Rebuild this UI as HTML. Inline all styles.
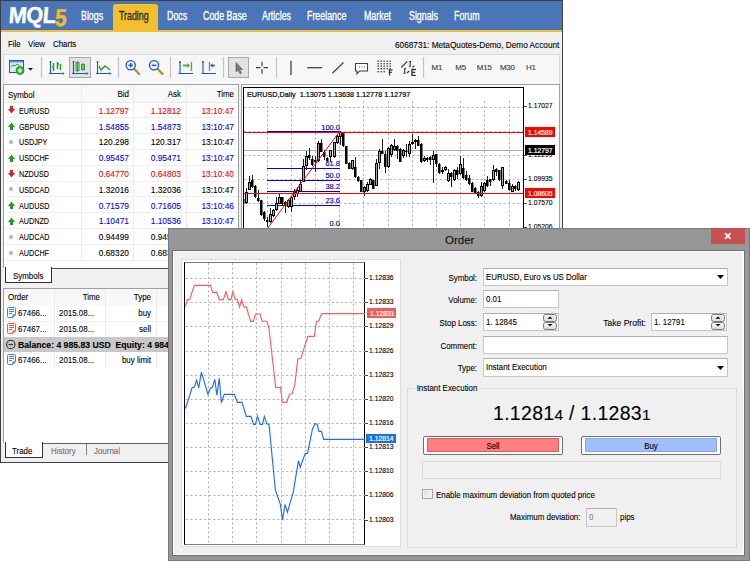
<!DOCTYPE html><html><head><meta charset="utf-8"><style>
*{margin:0;padding:0;box-sizing:border-box}
html,body{width:750px;height:561px;overflow:hidden;background:#fff;font-family:"Liberation Sans",sans-serif;color:#000}
.abs{position:absolute}
.t{position:absolute;white-space:nowrap;font-size:8.5px;line-height:10px;letter-spacing:-0.2px;-webkit-text-stroke:0.12px currentColor}
.r{text-align:right}
.n{font-size:9px;letter-spacing:0;transform-origin:0 0;transform:scaleX(0.88);-webkit-text-stroke:0.1px currentColor}
.r.n{transform-origin:100% 0}
</style></head><body>
<div class="abs" style="left:0;top:0;width:563px;height:463px;background:#f0f0f0;border:1px solid #404040"></div>
<div class="abs" style="left:1px;top:1px;width:561px;height:29px;background:#4a76b8"></div>
<div class="abs" style="left:1px;top:29px;width:561px;height:1px;background:#3f6ec4"></div>
<div class="abs" style="left:1px;top:30px;width:561px;height:2px;background:#f3bf2c"></div>
<div class="abs" style="left:113px;top:4px;width:45px;height:27px;background:#f3bf2c;border-radius:3px 3px 0 0"></div>
<div class="t" style="left:8px;top:1px;font-size:23px;line-height:28px;font-weight:bold;color:#fff;letter-spacing:-0.6px;-webkit-text-stroke:0.4px #fff;transform-origin:0 24px;transform:skewX(-4deg) scaleX(0.95)">MQL</div>
<div class="t" style="left:56.3px;top:2.5px;font-size:22px;line-height:28px;font-weight:bold;color:#f5b82a;-webkit-text-stroke:0.4px #f5b82a;transform-origin:0 0;transform:skewX(-4deg) scale(0.95,1.1)">5</div>
<div class="t" style="left:81.3px;top:7px;font-size:13px;line-height:18px;color:#fff;-webkit-text-stroke:0.35px #fff;letter-spacing:0;transform-origin:0 0;transform:scaleX(0.68)">Blogs</div>
<div class="t" style="left:119.2px;top:7px;font-size:13px;line-height:18px;color:#2b2b2b;-webkit-text-stroke:0.35px #2b2b2b;letter-spacing:0;transform-origin:0 0;transform:scaleX(0.68)">Trading</div>
<div class="t" style="left:166.7px;top:7px;font-size:13px;line-height:18px;color:#fff;-webkit-text-stroke:0.35px #fff;letter-spacing:0;transform-origin:0 0;transform:scaleX(0.68)">Docs</div>
<div class="t" style="left:202.7px;top:7px;font-size:13px;line-height:18px;color:#fff;-webkit-text-stroke:0.35px #fff;letter-spacing:0;transform-origin:0 0;transform:scaleX(0.68)">Code Base</div>
<div class="t" style="left:261.7px;top:7px;font-size:13px;line-height:18px;color:#fff;-webkit-text-stroke:0.35px #fff;letter-spacing:0;transform-origin:0 0;transform:scaleX(0.68)">Articles</div>
<div class="t" style="left:307.3px;top:7px;font-size:13px;line-height:18px;color:#fff;-webkit-text-stroke:0.35px #fff;letter-spacing:0;transform-origin:0 0;transform:scaleX(0.68)">Freelance</div>
<div class="t" style="left:364px;top:7px;font-size:13px;line-height:18px;color:#fff;-webkit-text-stroke:0.35px #fff;letter-spacing:0;transform-origin:0 0;transform:scaleX(0.68)">Market</div>
<div class="t" style="left:409px;top:7px;font-size:13px;line-height:18px;color:#fff;-webkit-text-stroke:0.35px #fff;letter-spacing:0;transform-origin:0 0;transform:scaleX(0.68)">Signals</div>
<div class="t" style="left:454.3px;top:7px;font-size:13px;line-height:18px;color:#fff;-webkit-text-stroke:0.35px #fff;letter-spacing:0;transform-origin:0 0;transform:scaleX(0.68)">Forum</div>
<div class="t n" style="left:8px;top:39px;">File</div>
<div class="t n" style="left:28px;top:39px;">View</div>
<div class="t n" style="left:53px;top:39px;">Charts</div>
<div class="t n" style="left:395px;top:40px;transform:scaleX(0.915)">6068731: MetaQuotes-Demo, Demo Account</div>
<div class="abs" style="left:3px;top:54px;width:557px;height:30px;background:#f7f7f7;border:1px solid #dadada;border-bottom:none"></div>
<svg class="abs" style="left:0;top:54px" width="562" height="30" viewBox="0 54 562 30">
<rect x="69.5" y="57.5" width="21.0" height="20" fill="#e2e2e2" stroke="#a8a8a8"/>
<rect x="228.5" y="57.5" width="20.0" height="20" fill="#e2e2e2" stroke="#a8a8a8"/>
<line x1="41.5" y1="57" x2="41.5" y2="78" stroke="#c4c4c4" stroke-width="1.2"/>
<line x1="118.5" y1="57" x2="118.5" y2="78" stroke="#c4c4c4" stroke-width="1.2"/>
<line x1="170.5" y1="57" x2="170.5" y2="78" stroke="#c4c4c4" stroke-width="1.2"/>
<line x1="223.5" y1="57" x2="223.5" y2="78" stroke="#c4c4c4" stroke-width="1.2"/>
<line x1="276.5" y1="57" x2="276.5" y2="78" stroke="#c4c4c4" stroke-width="1.2"/>
<line x1="423.5" y1="57" x2="423.5" y2="78" stroke="#c4c4c4" stroke-width="1.2"/>
<rect x="9.5" y="60.5" width="14" height="12" fill="#dbe8f8" stroke="#1a56c8"/>
<rect x="9.5" y="60.5" width="14" height="2" fill="#1a56c8" opacity="0.6"/>
<polyline points="11,67 13,65 15,66 17,64 20,66" fill="none" stroke="#2ca02c" stroke-width="1"/>
<circle cx="20" cy="70.5" r="4" fill="#3cb83c" stroke="#1f8a1f" stroke-width="0.8"/>
<path d="M18 70.5h4M20 68.5v4" stroke="#fff" stroke-width="1.4"/>
<path d="M28 68h5l-2.5 2.6z" fill="#000"/>
<path d="M50.5 61 V74 M49 73.5 H62.5" stroke="#1a56c8" stroke-width="1.1" fill="none"/><circle cx="50.5" cy="61.8" r="0.9" fill="#1a56c8"/><path d="M62.5 72 l2 1.5 l-2 1.5z" fill="#1a56c8"/>
<path d="M53.5 63v8M53.5 67h-1.5M57.5 62v7M57.5 64h1.5M60.5 64v6" stroke="#2ca02c" stroke-width="1.5" fill="none"/>
<path d="M73.5 61 V74 M72 73.5 H86.5" stroke="#1a56c8" stroke-width="1.1" fill="none"/><circle cx="73.5" cy="61.8" r="0.9" fill="#1a56c8"/><path d="M86.5 72 l2 1.5 l-2 1.5z" fill="#1a56c8"/>
<rect x="76" y="62.5" width="3" height="8" fill="#bfe6b0" stroke="#2ca02c" stroke-width="1"/><path d="M77.5 61v11" stroke="#2ca02c"/>
<rect x="81.5" y="64.5" width="3" height="5" fill="#bfe6b0" stroke="#2ca02c" stroke-width="1"/><path d="M83 63v8" stroke="#2ca02c"/>
<path d="M97.5 61 V74 M96 73.5 H109.5" stroke="#1a56c8" stroke-width="1.1" fill="none"/><circle cx="97.5" cy="61.8" r="0.9" fill="#1a56c8"/><path d="M109.5 72 l2 1.5 l-2 1.5z" fill="#1a56c8"/>
<polyline points="99,66 101,70 105,66 110,70" fill="none" stroke="#2ca02c" stroke-width="1.6"/>
<path d="M133.7 68.3 L139.2 74" stroke="#b58a2a" stroke-width="2.2" stroke-linecap="round"/>
<circle cx="130.7" cy="65.3" r="4.6" fill="#e8f2fc" stroke="#1a56c8" stroke-width="1.3"/>
<path d="M128.5 65.3h4.4" stroke="#1a56c8" stroke-width="1.4"/>
<path d="M130.7 63.1v4.4" stroke="#1a56c8" stroke-width="1.4"/>
<path d="M157 68.3 L162.5 74" stroke="#b58a2a" stroke-width="2.2" stroke-linecap="round"/>
<circle cx="154" cy="65.3" r="4.6" fill="#e8f2fc" stroke="#1a56c8" stroke-width="1.3"/>
<path d="M151.8 65.3h4.4" stroke="#1a56c8" stroke-width="1.4"/>
<path d="M180 61.5V74M178.5 73.5H193" stroke="#1a56c8" stroke-width="1.1"/><circle cx="180" cy="62" r="0.9" fill="#1a56c8"/>
<path d="M183 65.5h5" stroke="#3cb83c" stroke-width="2"/><path d="M187.5 63l2.5 2.5-2.5 2.5z" fill="#3cb83c"/>
<path d="M191.5 62v9" stroke="#808080" stroke-width="1.3"/>
<path d="M203 61.5V74M201.5 73.5H216" stroke="#1a56c8" stroke-width="1.1"/><circle cx="203" cy="62" r="0.9" fill="#1a56c8"/>
<path d="M209.5 62v9" stroke="#808080" stroke-width="1.3"/>
<path d="M215 65.5h-3" stroke="#1a56c8" stroke-width="1.5"/><path d="M212.5 63.3l-2.2 2.2 2.2 2.2z" fill="#1a56c8"/>
<path d="M236 62.5v9.5l2.2-2 1.8 3.8 1.4-0.7-1.8-3.6h3z" fill="#7a7a7a" stroke="#505050" stroke-width="0.6"/>
<path d="M256 67.7h4.5M263.5 67.7h4.5M262 61.7v4.5M262 69.2v4.5" stroke="#404040" stroke-width="1.2"/>
<path d="M291 60.7V75" stroke="#404040" stroke-width="1.3"/>
<path d="M307.3 67.7H322" stroke="#404040" stroke-width="1.3"/>
<path d="M332.4 73.3L343.6 62.4" stroke="#404040" stroke-width="1.3"/>
<path d="M355.5 63.5h12v7.5h-8l-2.5 2.8v-2.8h-1.5z" fill="#fff" stroke="#404040" stroke-width="1.1"/>
<path d="M359 67h1M361.5 67h1M364 67h1" stroke="#404040" stroke-width="1"/>
<rect x="377.5" y="60.5" width="1.4" height="1.4" fill="#404040"/>
<rect x="377.5" y="63" width="1.4" height="1.4" fill="#404040"/>
<rect x="377.5" y="65.5" width="1.4" height="1.4" fill="#404040"/>
<rect x="377.5" y="68" width="1.4" height="1.4" fill="#404040"/>
<rect x="380.5" y="60.5" width="1.4" height="1.4" fill="#404040"/>
<rect x="380.5" y="63" width="1.4" height="1.4" fill="#404040"/>
<rect x="380.5" y="65.5" width="1.4" height="1.4" fill="#404040"/>
<rect x="380.5" y="68" width="1.4" height="1.4" fill="#404040"/>
<rect x="383.5" y="60.5" width="1.4" height="1.4" fill="#404040"/>
<rect x="383.5" y="63" width="1.4" height="1.4" fill="#404040"/>
<rect x="383.5" y="65.5" width="1.4" height="1.4" fill="#404040"/>
<rect x="383.5" y="68" width="1.4" height="1.4" fill="#404040"/>
<rect x="386.5" y="60.5" width="1.4" height="1.4" fill="#404040"/>
<rect x="386.5" y="63" width="1.4" height="1.4" fill="#404040"/>
<rect x="386.5" y="65.5" width="1.4" height="1.4" fill="#404040"/>
<rect x="386.5" y="68" width="1.4" height="1.4" fill="#404040"/>
<rect x="389.5" y="60.5" width="1.4" height="1.4" fill="#404040"/>
<rect x="389.5" y="63" width="1.4" height="1.4" fill="#404040"/>
<rect x="389.5" y="65.5" width="1.4" height="1.4" fill="#404040"/>
<rect x="389.5" y="68" width="1.4" height="1.4" fill="#404040"/>
<rect x="377.5" y="71" width="1.4" height="1.4" fill="#404040"/>
<rect x="380.5" y="71" width="1.4" height="1.4" fill="#404040"/>
<rect x="383.5" y="71" width="1.4" height="1.4" fill="#404040"/>
<path d="M389.5 75.5V69.8h3M389.5 72.3h2.3" stroke="#303030" stroke-width="1.3" fill="none"/>
<path d="M401.3 67.3L407.3 61.3" stroke="#303030" stroke-width="1.2" fill="none"/>
<path d="M409.2 61.5h2M410.2 61.5v5M409.2 66.5h1.5" stroke="#303030" stroke-width="1.1" fill="none"/>
<path d="M412.5 67.2l1.8-1.6" stroke="#303030" stroke-width="1.2"/>
<path d="M403.5 73.3h2M404.7 73.3v-5M404.7 68.3h1.4" stroke="#303030" stroke-width="1.1" fill="none"/>
<path d="M407 73.2l2-2.2" stroke="#303030" stroke-width="1.2"/>
<path d="M415.8 69.5h-3.8v5.8h3.8M412 72.4h3.2" stroke="#303030" stroke-width="1.3" fill="none"/>
</svg>
<div class="t" style="left:431.6px;top:63px;color:#404040;font-size:8px">M1</div>
<div class="t" style="left:455.3px;top:63px;color:#404040;font-size:8px">M5</div>
<div class="t" style="left:476.7px;top:63px;color:#404040;font-size:8px">M15</div>
<div class="t" style="left:499.9px;top:63px;color:#404040;font-size:8px">M30</div>
<div class="t" style="left:526px;top:63px;color:#404040;font-size:8px">H1</div>
<div class="abs" style="left:3px;top:84px;width:236px;height:185px;background:#fff;border:1px solid #a0a0a0;border-bottom:none"></div>
<div class="abs" style="left:4px;top:85px;width:234px;height:18px;background:#f8f8f8;border-bottom:1px solid #e8e8e8"></div>
<div class="abs" style="left:81px;top:85px;width:1px;height:175px;background:#ececec"></div>
<div class="abs" style="left:133px;top:85px;width:1px;height:175px;background:#ececec"></div>
<div class="abs" style="left:186px;top:85px;width:1px;height:175px;background:#ececec"></div>
<div class="t n" style="left:7.5px;top:89.5px;">Symbol</div>
<div class="t r n" style="left:80px;width:49px;top:89px">Bid</div>
<div class="t r n" style="left:132px;width:49px;top:89px">Ask</div>
<div class="t r n" style="left:185px;width:49px;top:89px">Time</div>
<div class="abs" style="left:5px;top:117.3px;width:233px;height:1px;background:#efefef"></div>
<svg class="abs" style="left:8px;top:106.3px" width="7" height="8"><path d="M2 0h3v3h2l-3.5 4.5L0 3h2z" fill="#e02020"/></svg>
<div class="t n" style="left:18.5px;top:105.8px;transform:scaleX(0.8)">EURUSD</div>
<div class="t r n" style="left:80px;width:49px;top:105.8px;color:#ff0000;transform:scaleX(0.93)">1.12797</div>
<div class="t r n" style="left:132px;width:49px;top:105.8px;color:#ff0000;transform:scaleX(0.93)">1.12812</div>
<div class="t r n" style="left:185px;width:49px;top:105.8px;color:#ff0000;transform:scaleX(0.93)">13:10:47</div>
<div class="abs" style="left:5px;top:133.1px;width:233px;height:1px;background:#efefef"></div>
<svg class="abs" style="left:8px;top:122.1px" width="7" height="8"><path d="M2 8h3v-3h2l-3.5-4.5L0 5h2z" fill="#20a020"/></svg>
<div class="t n" style="left:18.5px;top:121.6px;transform:scaleX(0.8)">GBPUSD</div>
<div class="t r n" style="left:80px;width:49px;top:121.6px;color:#0000ff;transform:scaleX(0.93)">1.54855</div>
<div class="t r n" style="left:132px;width:49px;top:121.6px;color:#0000ff;transform:scaleX(0.93)">1.54873</div>
<div class="t r n" style="left:185px;width:49px;top:121.6px;color:#0000ff;transform:scaleX(0.93)">13:10:47</div>
<div class="abs" style="left:5px;top:148.9px;width:233px;height:1px;background:#efefef"></div>
<div class="abs" style="left:9px;top:139.9px;width:4px;height:4px;border-radius:50%;background:#b0b0b0"></div>
<div class="t n" style="left:18.5px;top:137.4px;transform:scaleX(0.8)">USDJPY</div>
<div class="t r n" style="left:80px;width:49px;top:137.4px;color:#000;transform:scaleX(0.93)">120.298</div>
<div class="t r n" style="left:132px;width:49px;top:137.4px;color:#000;transform:scaleX(0.93)">120.317</div>
<div class="t r n" style="left:185px;width:49px;top:137.4px;color:#000;transform:scaleX(0.93)">13:10:47</div>
<div class="abs" style="left:5px;top:164.7px;width:233px;height:1px;background:#efefef"></div>
<svg class="abs" style="left:8px;top:153.7px" width="7" height="8"><path d="M2 8h3v-3h2l-3.5-4.5L0 5h2z" fill="#20a020"/></svg>
<div class="t n" style="left:18.5px;top:153.2px;transform:scaleX(0.8)">USDCHF</div>
<div class="t r n" style="left:80px;width:49px;top:153.2px;color:#0000ff;transform:scaleX(0.93)">0.95457</div>
<div class="t r n" style="left:132px;width:49px;top:153.2px;color:#0000ff;transform:scaleX(0.93)">0.95471</div>
<div class="t r n" style="left:185px;width:49px;top:153.2px;color:#0000ff;transform:scaleX(0.93)">13:10:47</div>
<div class="abs" style="left:5px;top:180.5px;width:233px;height:1px;background:#efefef"></div>
<svg class="abs" style="left:8px;top:169.5px" width="7" height="8"><path d="M2 0h3v3h2l-3.5 4.5L0 3h2z" fill="#e02020"/></svg>
<div class="t n" style="left:18.5px;top:169.0px;transform:scaleX(0.8)">NZDUSD</div>
<div class="t r n" style="left:80px;width:49px;top:169.0px;color:#ff0000;transform:scaleX(0.93)">0.64770</div>
<div class="t r n" style="left:132px;width:49px;top:169.0px;color:#ff0000;transform:scaleX(0.93)">0.64803</div>
<div class="t r n" style="left:185px;width:49px;top:169.0px;color:#ff0000;transform:scaleX(0.93)">13:10:40</div>
<div class="abs" style="left:5px;top:196.3px;width:233px;height:1px;background:#efefef"></div>
<div class="abs" style="left:9px;top:187.3px;width:4px;height:4px;border-radius:50%;background:#b0b0b0"></div>
<div class="t n" style="left:18.5px;top:184.8px;transform:scaleX(0.8)">USDCAD</div>
<div class="t r n" style="left:80px;width:49px;top:184.8px;color:#000;transform:scaleX(0.93)">1.32016</div>
<div class="t r n" style="left:132px;width:49px;top:184.8px;color:#000;transform:scaleX(0.93)">1.32036</div>
<div class="t r n" style="left:185px;width:49px;top:184.8px;color:#000;transform:scaleX(0.93)">13:10:47</div>
<div class="abs" style="left:5px;top:212.1px;width:233px;height:1px;background:#efefef"></div>
<svg class="abs" style="left:8px;top:201.1px" width="7" height="8"><path d="M2 8h3v-3h2l-3.5-4.5L0 5h2z" fill="#20a020"/></svg>
<div class="t n" style="left:18.5px;top:200.6px;transform:scaleX(0.8)">AUDUSD</div>
<div class="t r n" style="left:80px;width:49px;top:200.6px;color:#0000ff;transform:scaleX(0.93)">0.71579</div>
<div class="t r n" style="left:132px;width:49px;top:200.6px;color:#0000ff;transform:scaleX(0.93)">0.71605</div>
<div class="t r n" style="left:185px;width:49px;top:200.6px;color:#0000ff;transform:scaleX(0.93)">13:10:46</div>
<div class="abs" style="left:5px;top:227.9px;width:233px;height:1px;background:#efefef"></div>
<svg class="abs" style="left:8px;top:216.9px" width="7" height="8"><path d="M2 8h3v-3h2l-3.5-4.5L0 5h2z" fill="#20a020"/></svg>
<div class="t n" style="left:18.5px;top:216.4px;transform:scaleX(0.8)">AUDNZD</div>
<div class="t r n" style="left:80px;width:49px;top:216.4px;color:#0000ff;transform:scaleX(0.93)">1.10471</div>
<div class="t r n" style="left:132px;width:49px;top:216.4px;color:#0000ff;transform:scaleX(0.93)">1.10536</div>
<div class="t r n" style="left:185px;width:49px;top:216.4px;color:#0000ff;transform:scaleX(0.93)">13:10:47</div>
<div class="abs" style="left:5px;top:243.7px;width:233px;height:1px;background:#efefef"></div>
<div class="abs" style="left:9px;top:234.7px;width:4px;height:4px;border-radius:50%;background:#b0b0b0"></div>
<div class="t n" style="left:18.5px;top:232.2px;transform:scaleX(0.8)">AUDCAD</div>
<div class="t r n" style="left:80px;width:49px;top:232.2px;color:#000;transform:scaleX(0.93)">0.94499</div>
<div class="t r n" style="left:132px;width:49px;top:232.2px;color:#000;transform:scaleX(0.93)">0.94512</div>
<div class="t r n" style="left:185px;width:49px;top:232.2px;color:#000;transform:scaleX(0.93)">13:10:47</div>
<div class="abs" style="left:5px;top:259.5px;width:233px;height:1px;background:#efefef"></div>
<div class="abs" style="left:9px;top:250.5px;width:4px;height:4px;border-radius:50%;background:#b0b0b0"></div>
<div class="t n" style="left:18.5px;top:248.0px;transform:scaleX(0.8)">AUDCHF</div>
<div class="t r n" style="left:80px;width:49px;top:248.0px;color:#000;transform:scaleX(0.93)">0.68320</div>
<div class="t r n" style="left:132px;width:49px;top:248.0px;color:#000;transform:scaleX(0.93)">0.68337</div>
<div class="t r n" style="left:185px;width:49px;top:248.0px;color:#000;transform:scaleX(0.93)">13:10:47</div>
<div class="abs" style="left:51px;top:268px;width:188px;height:15px;background:#f0f0f0;border-top:1px solid #505050"></div>
<div class="abs" style="left:3px;top:268px;width:2px;height:15px;background:#f0f0f0"></div>
<div class="abs" style="left:5px;top:267px;width:47px;height:16px;background:#fff;border:1px solid #303030;border-top:none;border-right-width:1.5px"></div>
<div class="t n" style="left:12.5px;top:271px;">Symbols</div>
<div class="abs" style="left:239px;top:84px;width:2px;height:200px;background:#f0f0f0"></div>
<div class="abs" style="left:241px;top:84px;width:319px;height:150px;background:#fff;border:1px solid #a0a0a0"></div>
<div class="abs" style="left:243px;top:87px;width:281px;height:150px;border-left:1px solid #000;border-top:1px solid #000;border-right:1px solid #000"></div>
<svg class="abs" style="left:243px;top:84px" width="320" height="150" viewBox="243 84 320 150" shape-rendering="crispEdges">
<line x1="267.5" y1="101" x2="267.5" y2="230" stroke="#b4b4b4" stroke-dasharray="2.2,2.35" shape-rendering="auto"/>
<line x1="291.5" y1="101" x2="291.5" y2="230" stroke="#b4b4b4" stroke-dasharray="2.2,2.35" shape-rendering="auto"/>
<line x1="315.5" y1="101" x2="315.5" y2="230" stroke="#b4b4b4" stroke-dasharray="2.2,2.35" shape-rendering="auto"/>
<line x1="339.5" y1="101" x2="339.5" y2="230" stroke="#b4b4b4" stroke-dasharray="2.2,2.35" shape-rendering="auto"/>
<line x1="363.5" y1="101" x2="363.5" y2="230" stroke="#b4b4b4" stroke-dasharray="2.2,2.35" shape-rendering="auto"/>
<line x1="388.5" y1="101" x2="388.5" y2="230" stroke="#b4b4b4" stroke-dasharray="2.2,2.35" shape-rendering="auto"/>
<line x1="412.5" y1="101" x2="412.5" y2="230" stroke="#b4b4b4" stroke-dasharray="2.2,2.35" shape-rendering="auto"/>
<line x1="436.5" y1="101" x2="436.5" y2="230" stroke="#b4b4b4" stroke-dasharray="2.2,2.35" shape-rendering="auto"/>
<line x1="460.5" y1="101" x2="460.5" y2="230" stroke="#b4b4b4" stroke-dasharray="2.2,2.35" shape-rendering="auto"/>
<line x1="484.5" y1="101" x2="484.5" y2="230" stroke="#b4b4b4" stroke-dasharray="2.2,2.35" shape-rendering="auto"/>
<line x1="509.5" y1="101" x2="509.5" y2="230" stroke="#b4b4b4" stroke-dasharray="2.2,2.35" shape-rendering="auto"/>
<line x1="244" y1="107.5" x2="523" y2="107.5" stroke="#b4b4b4" stroke-dasharray="2.2,2.35" shape-rendering="auto"/>
<line x1="244" y1="131.5" x2="523" y2="131.5" stroke="#b4b4b4" stroke-dasharray="2.2,2.35" shape-rendering="auto"/>
<line x1="244" y1="155.5" x2="523" y2="155.5" stroke="#b4b4b4" stroke-dasharray="2.2,2.35" shape-rendering="auto"/>
<line x1="244" y1="179.5" x2="523" y2="179.5" stroke="#b4b4b4" stroke-dasharray="2.2,2.35" shape-rendering="auto"/>
<line x1="244" y1="203.5" x2="523" y2="203.5" stroke="#b4b4b4" stroke-dasharray="2.2,2.35" shape-rendering="auto"/>
<line x1="244" y1="228.5" x2="523" y2="228.5" stroke="#b4b4b4" stroke-dasharray="2.2,2.35" shape-rendering="auto"/>
<line x1="244" y1="150.5" x2="523" y2="150.5" stroke="#b0b0b0"/>
<line x1="267" y1="131.5" x2="340" y2="131.5" stroke="#0000e0" stroke-width="1"/>
<line x1="267" y1="168.5" x2="340" y2="168.5" stroke="#0000e0" stroke-width="1"/>
<line x1="267" y1="180.5" x2="340" y2="180.5" stroke="#0000e0" stroke-width="1"/>
<line x1="267" y1="191.5" x2="340" y2="191.5" stroke="#0000e0" stroke-width="1"/>
<line x1="267" y1="205.5" x2="340" y2="205.5" stroke="#0000e0" stroke-width="1"/>
<line x1="267" y1="229.5" x2="340" y2="229.5" stroke="#0000e0" stroke-width="1"/>
<rect x="243" y="197" width="1" height="9" fill="#202020"/>
<rect x="242" y="199" width="2" height="5" fill="#000"/>
<rect x="244" y="199" width="1" height="5" fill="#7a7a7a"/>
<rect x="246" y="188" width="1" height="16" fill="#202020"/>
<rect x="245" y="192" width="3" height="11" fill="#000"/>
<rect x="246" y="193" width="1" height="9" fill="#a8a8a8"/>
<rect x="249" y="176" width="1" height="14" fill="#202020"/>
<rect x="248" y="182" width="3" height="8" fill="#000"/>
<rect x="249" y="183" width="1" height="6" fill="#a8a8a8"/>
<rect x="252" y="175" width="1" height="13" fill="#202020"/>
<rect x="251" y="180" width="2" height="7" fill="#000"/>
<rect x="253" y="180" width="1" height="7" fill="#7a7a7a"/>
<rect x="255" y="185" width="1" height="13" fill="#202020"/>
<rect x="254" y="186" width="2" height="11" fill="#000"/>
<rect x="256" y="186" width="1" height="11" fill="#7a7a7a"/>
<rect x="258" y="190" width="1" height="12" fill="#202020"/>
<rect x="257" y="198" width="2" height="3" fill="#000"/>
<rect x="259" y="198" width="1" height="3" fill="#7a7a7a"/>
<rect x="261" y="200" width="1" height="16" fill="#202020"/>
<rect x="260" y="200" width="2" height="15" fill="#000"/>
<rect x="262" y="200" width="1" height="15" fill="#7a7a7a"/>
<rect x="264" y="211" width="1" height="10" fill="#202020"/>
<rect x="263" y="212" width="2" height="7" fill="#000"/>
<rect x="265" y="212" width="1" height="7" fill="#7a7a7a"/>
<rect x="267" y="217" width="1" height="10" fill="#202020"/>
<rect x="266" y="220" width="2" height="2" fill="#000"/>
<rect x="268" y="220" width="1" height="2" fill="#7a7a7a"/>
<rect x="270" y="208" width="1" height="15" fill="#202020"/>
<rect x="269" y="214" width="3" height="8" fill="#000"/>
<rect x="270" y="215" width="1" height="6" fill="#a8a8a8"/>
<rect x="273" y="209" width="1" height="8" fill="#202020"/>
<rect x="272" y="210" width="3" height="6" fill="#000"/>
<rect x="273" y="211" width="1" height="4" fill="#a8a8a8"/>
<rect x="276" y="197" width="1" height="14" fill="#202020"/>
<rect x="275" y="203" width="3" height="7" fill="#000"/>
<rect x="276" y="204" width="1" height="5" fill="#a8a8a8"/>
<rect x="279" y="194" width="1" height="10" fill="#202020"/>
<rect x="278" y="197" width="3" height="7" fill="#000"/>
<rect x="279" y="198" width="1" height="5" fill="#a8a8a8"/>
<rect x="282" y="197" width="1" height="9" fill="#202020"/>
<rect x="281" y="197" width="2" height="7" fill="#000"/>
<rect x="283" y="197" width="1" height="7" fill="#7a7a7a"/>
<rect x="285" y="201" width="1" height="12" fill="#202020"/>
<rect x="284" y="202" width="2" height="4" fill="#000"/>
<rect x="286" y="202" width="1" height="4" fill="#7a7a7a"/>
<rect x="288" y="199" width="1" height="9" fill="#202020"/>
<rect x="287" y="200" width="3" height="7" fill="#000"/>
<rect x="288" y="201" width="1" height="5" fill="#a8a8a8"/>
<rect x="291" y="196" width="1" height="16" fill="#202020"/>
<rect x="290" y="197" width="3" height="10" fill="#000"/>
<rect x="291" y="198" width="1" height="8" fill="#a8a8a8"/>
<rect x="294" y="189" width="1" height="11" fill="#202020"/>
<rect x="293" y="192" width="3" height="5" fill="#000"/>
<rect x="294" y="193" width="1" height="3" fill="#a8a8a8"/>
<rect x="297" y="187" width="1" height="10" fill="#202020"/>
<rect x="296" y="190" width="3" height="4" fill="#000"/>
<rect x="297" y="191" width="1" height="2" fill="#a8a8a8"/>
<rect x="300" y="180" width="1" height="12" fill="#202020"/>
<rect x="299" y="184" width="3" height="8" fill="#000"/>
<rect x="300" y="185" width="1" height="6" fill="#a8a8a8"/>
<rect x="303" y="159" width="1" height="23" fill="#202020"/>
<rect x="302" y="166" width="3" height="16" fill="#000"/>
<rect x="303" y="167" width="1" height="14" fill="#a8a8a8"/>
<rect x="306" y="151" width="1" height="19" fill="#202020"/>
<rect x="305" y="156" width="3" height="10" fill="#000"/>
<rect x="306" y="157" width="1" height="8" fill="#a8a8a8"/>
<rect x="309" y="148" width="1" height="12" fill="#202020"/>
<rect x="308" y="155" width="2" height="3" fill="#000"/>
<rect x="310" y="155" width="1" height="3" fill="#7a7a7a"/>
<rect x="312" y="156" width="1" height="10" fill="#202020"/>
<rect x="311" y="159" width="2" height="6" fill="#000"/>
<rect x="313" y="159" width="1" height="6" fill="#7a7a7a"/>
<rect x="315" y="156" width="1" height="16" fill="#202020"/>
<rect x="314" y="160" width="2" height="2" fill="#000"/>
<rect x="316" y="160" width="1" height="2" fill="#7a7a7a"/>
<rect x="318" y="141" width="1" height="21" fill="#202020"/>
<rect x="317" y="143" width="3" height="18" fill="#000"/>
<rect x="318" y="144" width="1" height="16" fill="#a8a8a8"/>
<rect x="321" y="139" width="1" height="13" fill="#202020"/>
<rect x="320" y="143" width="2" height="9" fill="#000"/>
<rect x="322" y="143" width="1" height="9" fill="#7a7a7a"/>
<rect x="324" y="150" width="1" height="10" fill="#202020"/>
<rect x="323" y="152" width="2" height="5" fill="#000"/>
<rect x="325" y="152" width="1" height="5" fill="#7a7a7a"/>
<rect x="327" y="157" width="1" height="5" fill="#202020"/>
<rect x="326" y="158" width="2" height="3" fill="#000"/>
<rect x="328" y="158" width="1" height="3" fill="#7a7a7a"/>
<rect x="330" y="150" width="1" height="12" fill="#202020"/>
<rect x="329" y="150" width="3" height="7" fill="#000"/>
<rect x="330" y="151" width="1" height="5" fill="#a8a8a8"/>
<rect x="334" y="142" width="1" height="16" fill="#202020"/>
<rect x="333" y="142" width="3" height="15" fill="#000"/>
<rect x="334" y="143" width="1" height="13" fill="#a8a8a8"/>
<rect x="337" y="135" width="1" height="9" fill="#202020"/>
<rect x="336" y="136" width="3" height="7" fill="#000"/>
<rect x="337" y="137" width="1" height="5" fill="#a8a8a8"/>
<rect x="340" y="131" width="1" height="14" fill="#202020"/>
<rect x="339" y="132" width="3" height="5" fill="#000"/>
<rect x="340" y="133" width="1" height="3" fill="#a8a8a8"/>
<rect x="343" y="132" width="1" height="15" fill="#202020"/>
<rect x="342" y="132" width="2" height="14" fill="#000"/>
<rect x="344" y="132" width="1" height="14" fill="#7a7a7a"/>
<rect x="346" y="146" width="1" height="18" fill="#202020"/>
<rect x="345" y="146" width="2" height="18" fill="#000"/>
<rect x="347" y="146" width="1" height="18" fill="#7a7a7a"/>
<rect x="349" y="162" width="1" height="7" fill="#202020"/>
<rect x="348" y="163" width="2" height="6" fill="#000"/>
<rect x="350" y="163" width="1" height="6" fill="#7a7a7a"/>
<rect x="352" y="160" width="1" height="10" fill="#202020"/>
<rect x="351" y="160" width="3" height="9" fill="#000"/>
<rect x="352" y="161" width="1" height="7" fill="#a8a8a8"/>
<rect x="355" y="157" width="1" height="21" fill="#202020"/>
<rect x="354" y="167" width="2" height="10" fill="#000"/>
<rect x="356" y="167" width="1" height="10" fill="#7a7a7a"/>
<rect x="358" y="176" width="1" height="6" fill="#202020"/>
<rect x="357" y="177" width="2" height="4" fill="#000"/>
<rect x="359" y="177" width="1" height="4" fill="#7a7a7a"/>
<rect x="361" y="180" width="1" height="12" fill="#202020"/>
<rect x="360" y="180" width="2" height="12" fill="#000"/>
<rect x="362" y="180" width="1" height="12" fill="#7a7a7a"/>
<rect x="364" y="186" width="1" height="10" fill="#202020"/>
<rect x="363" y="187" width="3" height="5" fill="#000"/>
<rect x="364" y="188" width="1" height="3" fill="#a8a8a8"/>
<rect x="367" y="182" width="1" height="10" fill="#202020"/>
<rect x="366" y="184" width="3" height="7" fill="#000"/>
<rect x="367" y="185" width="1" height="5" fill="#a8a8a8"/>
<rect x="370" y="178" width="1" height="7" fill="#202020"/>
<rect x="369" y="179" width="3" height="6" fill="#000"/>
<rect x="370" y="180" width="1" height="4" fill="#a8a8a8"/>
<rect x="373" y="180" width="1" height="9" fill="#202020"/>
<rect x="372" y="180" width="2" height="9" fill="#000"/>
<rect x="374" y="180" width="1" height="9" fill="#7a7a7a"/>
<rect x="376" y="159" width="1" height="27" fill="#202020"/>
<rect x="375" y="163" width="3" height="23" fill="#000"/>
<rect x="376" y="164" width="1" height="21" fill="#a8a8a8"/>
<rect x="379" y="149" width="1" height="20" fill="#202020"/>
<rect x="378" y="151" width="3" height="12" fill="#000"/>
<rect x="379" y="152" width="1" height="10" fill="#a8a8a8"/>
<rect x="382" y="139" width="1" height="15" fill="#202020"/>
<rect x="381" y="151" width="2" height="3" fill="#000"/>
<rect x="383" y="151" width="1" height="3" fill="#7a7a7a"/>
<rect x="385" y="151" width="1" height="22" fill="#202020"/>
<rect x="384" y="154" width="2" height="13" fill="#000"/>
<rect x="386" y="154" width="1" height="13" fill="#7a7a7a"/>
<rect x="388" y="147" width="1" height="21" fill="#202020"/>
<rect x="387" y="148" width="3" height="19" fill="#000"/>
<rect x="388" y="149" width="1" height="17" fill="#a8a8a8"/>
<rect x="391" y="144" width="1" height="13" fill="#202020"/>
<rect x="390" y="145" width="3" height="10" fill="#000"/>
<rect x="391" y="146" width="1" height="8" fill="#a8a8a8"/>
<rect x="394" y="139" width="1" height="12" fill="#202020"/>
<rect x="393" y="146" width="3" height="4" fill="#000"/>
<rect x="394" y="147" width="1" height="2" fill="#a8a8a8"/>
<rect x="397" y="145" width="1" height="14" fill="#202020"/>
<rect x="396" y="146" width="2" height="5" fill="#000"/>
<rect x="398" y="146" width="1" height="5" fill="#7a7a7a"/>
<rect x="400" y="148" width="1" height="14" fill="#202020"/>
<rect x="399" y="149" width="2" height="13" fill="#000"/>
<rect x="401" y="149" width="1" height="13" fill="#7a7a7a"/>
<rect x="403" y="149" width="1" height="9" fill="#202020"/>
<rect x="402" y="150" width="3" height="6" fill="#000"/>
<rect x="403" y="151" width="1" height="4" fill="#a8a8a8"/>
<rect x="406" y="144" width="1" height="13" fill="#202020"/>
<rect x="405" y="151" width="2" height="1" fill="#000"/>
<rect x="407" y="151" width="1" height="1" fill="#7a7a7a"/>
<rect x="409" y="141" width="1" height="16" fill="#202020"/>
<rect x="408" y="144" width="3" height="10" fill="#000"/>
<rect x="409" y="145" width="1" height="8" fill="#a8a8a8"/>
<rect x="412" y="134" width="1" height="11" fill="#202020"/>
<rect x="411" y="142" width="3" height="2" fill="#000"/>
<rect x="415" y="139" width="1" height="10" fill="#202020"/>
<rect x="414" y="140" width="3" height="2" fill="#000"/>
<rect x="418" y="136" width="1" height="10" fill="#202020"/>
<rect x="417" y="140" width="2" height="6" fill="#000"/>
<rect x="419" y="140" width="1" height="6" fill="#7a7a7a"/>
<rect x="421" y="143" width="1" height="20" fill="#202020"/>
<rect x="420" y="144" width="2" height="18" fill="#000"/>
<rect x="422" y="144" width="1" height="18" fill="#7a7a7a"/>
<rect x="424" y="156" width="1" height="6" fill="#202020"/>
<rect x="423" y="158" width="3" height="3" fill="#000"/>
<rect x="424" y="159" width="1" height="1" fill="#a8a8a8"/>
<rect x="427" y="157" width="1" height="5" fill="#202020"/>
<rect x="426" y="158" width="2" height="2" fill="#000"/>
<rect x="428" y="158" width="1" height="2" fill="#7a7a7a"/>
<rect x="430" y="156" width="1" height="9" fill="#202020"/>
<rect x="429" y="157" width="2" height="3" fill="#000"/>
<rect x="431" y="157" width="1" height="3" fill="#7a7a7a"/>
<rect x="433" y="151" width="1" height="32" fill="#202020"/>
<rect x="432" y="155" width="3" height="5" fill="#000"/>
<rect x="433" y="156" width="1" height="3" fill="#a8a8a8"/>
<rect x="436" y="154" width="1" height="13" fill="#202020"/>
<rect x="435" y="154" width="2" height="10" fill="#000"/>
<rect x="437" y="154" width="1" height="10" fill="#7a7a7a"/>
<rect x="439" y="163" width="1" height="11" fill="#202020"/>
<rect x="438" y="164" width="2" height="9" fill="#000"/>
<rect x="440" y="164" width="1" height="9" fill="#7a7a7a"/>
<rect x="442" y="167" width="1" height="7" fill="#202020"/>
<rect x="441" y="170" width="3" height="2" fill="#000"/>
<rect x="445" y="166" width="1" height="5" fill="#202020"/>
<rect x="444" y="167" width="3" height="3" fill="#000"/>
<rect x="445" y="168" width="1" height="1" fill="#a8a8a8"/>
<rect x="448" y="169" width="1" height="13" fill="#202020"/>
<rect x="447" y="173" width="3" height="8" fill="#000"/>
<rect x="448" y="174" width="1" height="6" fill="#a8a8a8"/>
<rect x="451" y="172" width="1" height="15" fill="#202020"/>
<rect x="450" y="173" width="2" height="4" fill="#000"/>
<rect x="452" y="173" width="1" height="4" fill="#7a7a7a"/>
<rect x="454" y="169" width="1" height="12" fill="#202020"/>
<rect x="453" y="170" width="3" height="10" fill="#000"/>
<rect x="454" y="171" width="1" height="8" fill="#a8a8a8"/>
<rect x="457" y="167" width="1" height="12" fill="#202020"/>
<rect x="456" y="170" width="2" height="5" fill="#000"/>
<rect x="458" y="170" width="1" height="5" fill="#7a7a7a"/>
<rect x="460" y="156" width="1" height="19" fill="#202020"/>
<rect x="459" y="164" width="3" height="10" fill="#000"/>
<rect x="460" y="165" width="1" height="8" fill="#a8a8a8"/>
<rect x="463" y="158" width="1" height="21" fill="#202020"/>
<rect x="462" y="168" width="2" height="10" fill="#000"/>
<rect x="464" y="168" width="1" height="10" fill="#7a7a7a"/>
<rect x="466" y="171" width="1" height="10" fill="#202020"/>
<rect x="465" y="175" width="2" height="5" fill="#000"/>
<rect x="467" y="175" width="1" height="5" fill="#7a7a7a"/>
<rect x="469" y="175" width="1" height="10" fill="#202020"/>
<rect x="468" y="178" width="2" height="6" fill="#000"/>
<rect x="470" y="178" width="1" height="6" fill="#7a7a7a"/>
<rect x="472" y="182" width="1" height="10" fill="#202020"/>
<rect x="471" y="183" width="2" height="9" fill="#000"/>
<rect x="473" y="183" width="1" height="9" fill="#7a7a7a"/>
<rect x="475" y="187" width="1" height="7" fill="#202020"/>
<rect x="474" y="188" width="2" height="5" fill="#000"/>
<rect x="476" y="188" width="1" height="5" fill="#7a7a7a"/>
<rect x="478" y="191" width="1" height="7" fill="#202020"/>
<rect x="477" y="192" width="2" height="4" fill="#000"/>
<rect x="479" y="192" width="1" height="4" fill="#7a7a7a"/>
<rect x="481" y="182" width="1" height="15" fill="#202020"/>
<rect x="480" y="186" width="3" height="10" fill="#000"/>
<rect x="481" y="187" width="1" height="8" fill="#a8a8a8"/>
<rect x="484" y="182" width="1" height="10" fill="#202020"/>
<rect x="483" y="183" width="3" height="8" fill="#000"/>
<rect x="484" y="184" width="1" height="6" fill="#a8a8a8"/>
<rect x="487" y="176" width="1" height="11" fill="#202020"/>
<rect x="486" y="180" width="2" height="6" fill="#000"/>
<rect x="488" y="180" width="1" height="6" fill="#7a7a7a"/>
<rect x="490" y="179" width="1" height="7" fill="#202020"/>
<rect x="489" y="179" width="2" height="3" fill="#000"/>
<rect x="491" y="179" width="1" height="3" fill="#7a7a7a"/>
<rect x="493" y="165" width="1" height="16" fill="#202020"/>
<rect x="492" y="170" width="3" height="10" fill="#000"/>
<rect x="493" y="171" width="1" height="8" fill="#a8a8a8"/>
<rect x="496" y="168" width="1" height="8" fill="#202020"/>
<rect x="495" y="169" width="2" height="3" fill="#000"/>
<rect x="497" y="169" width="1" height="3" fill="#7a7a7a"/>
<rect x="499" y="170" width="1" height="11" fill="#202020"/>
<rect x="498" y="170" width="2" height="10" fill="#000"/>
<rect x="500" y="170" width="1" height="10" fill="#7a7a7a"/>
<rect x="502" y="179" width="1" height="10" fill="#202020"/>
<rect x="501" y="180" width="2" height="6" fill="#000"/>
<rect x="503" y="180" width="1" height="6" fill="#7a7a7a"/>
<rect x="502" y="167" width="1" height="19" fill="#202020"/>
<rect x="501" y="167" width="3" height="19" fill="#000"/>
<rect x="502" y="168" width="1" height="17" fill="#a8a8a8"/>
<rect x="506" y="180" width="1" height="4" fill="#202020"/>
<rect x="505" y="181" width="2" height="3" fill="#000"/>
<rect x="507" y="181" width="1" height="3" fill="#7a7a7a"/>
<rect x="509" y="180" width="1" height="11" fill="#202020"/>
<rect x="508" y="183" width="2" height="7" fill="#000"/>
<rect x="510" y="183" width="1" height="7" fill="#7a7a7a"/>
<rect x="512" y="184" width="1" height="8" fill="#202020"/>
<rect x="511" y="186" width="3" height="6" fill="#000"/>
<rect x="512" y="187" width="1" height="4" fill="#a8a8a8"/>
<rect x="515" y="185" width="1" height="6" fill="#202020"/>
<rect x="514" y="186" width="2" height="3" fill="#000"/>
<rect x="516" y="186" width="1" height="3" fill="#7a7a7a"/>
<rect x="518" y="181" width="1" height="10" fill="#202020"/>
<rect x="517" y="182" width="3" height="8" fill="#000"/>
<rect x="518" y="183" width="1" height="6" fill="#a8a8a8"/>
<line x1="244" y1="132.5" x2="523" y2="132.5" stroke="#ff0000"/>
<line x1="244" y1="193.5" x2="523" y2="193.5" stroke="#ff0000"/>
<line x1="267" y1="229" x2="340" y2="131" stroke="#ff0000" stroke-width="1" shape-rendering="auto"/>
</svg>
<div class="t" style="left:247px;top:90px;font-size:7.5px;letter-spacing:0;-webkit-text-stroke:0.2px #000;transform-origin:0 0;transform:scaleX(0.965)">EURUSD,Daily&nbsp; 1.13075 1.13638 1.12778 1.12797</div>
<div class="t r" style="left:299px;width:41px;top:123px;font-size:7.5px;letter-spacing:0;-webkit-text-stroke:0.15px #0000e0;color:#0000e0">100.0</div>
<div class="t r" style="left:299px;width:41px;top:159px;font-size:7.5px;letter-spacing:0;-webkit-text-stroke:0.15px #0000e0;color:#0000e0">61.8</div>
<div class="t r" style="left:299px;width:41px;top:171px;font-size:7.5px;letter-spacing:0;-webkit-text-stroke:0.15px #0000e0;color:#0000e0">50.0</div>
<div class="t r" style="left:299px;width:41px;top:182px;font-size:7.5px;letter-spacing:0;-webkit-text-stroke:0.15px #0000e0;color:#0000e0">38.2</div>
<div class="t r" style="left:299px;width:41px;top:196px;font-size:7.5px;letter-spacing:0;-webkit-text-stroke:0.15px #0000e0;color:#0000e0">23.6</div>
<div class="t r" style="left:299px;width:41px;top:219px;font-size:7.5px;letter-spacing:0;-webkit-text-stroke:0.15px #0000e0;color:#0000e0">0.0</div>
<div class="abs" style="left:524px;top:106px;width:3px;height:1px;background:#555"></div>
<div class="t" style="left:527.5px;top:101px;font-size:7.5px;letter-spacing:0;-webkit-text-stroke:0.12px #000;transform-origin:0 0;transform:scaleX(0.9)">1.17027</div>
<div class="abs" style="left:524px;top:155px;width:3px;height:1px;background:#555"></div>
<div class="t" style="left:527.5px;top:150px;font-size:7.5px;letter-spacing:0;-webkit-text-stroke:0.12px #000;transform-origin:0 0;transform:scaleX(0.9)">1.12299</div>
<div class="abs" style="left:524px;top:179px;width:3px;height:1px;background:#555"></div>
<div class="t" style="left:527.5px;top:174px;font-size:7.5px;letter-spacing:0;-webkit-text-stroke:0.12px #000;transform-origin:0 0;transform:scaleX(0.9)">1.09935</div>
<div class="abs" style="left:524px;top:203px;width:3px;height:1px;background:#555"></div>
<div class="t" style="left:527.5px;top:198px;font-size:7.5px;letter-spacing:0;-webkit-text-stroke:0.12px #000;transform-origin:0 0;transform:scaleX(0.9)">1.07570</div>
<div class="abs" style="left:524px;top:227px;width:3px;height:1px;background:#555"></div>
<div class="t" style="left:527.5px;top:222px;font-size:7.5px;letter-spacing:0;-webkit-text-stroke:0.12px #000;transform-origin:0 0;transform:scaleX(0.9)">1.05206</div>
<div class="abs" style="left:525px;top:127px;width:30px;height:10px;background:#ff0000"></div>
<div class="t" style="left:527.5px;top:127.0px;line-height:11px;color:#fff;font-size:7.5px;letter-spacing:0;-webkit-text-stroke:0.2px #fff;transform-origin:0 0;transform:scaleX(0.9)">1.14589</div>
<div class="abs" style="left:525px;top:145px;width:30px;height:10px;background:#000"></div>
<div class="t" style="left:527.5px;top:145.0px;line-height:11px;color:#fff;font-size:7.5px;letter-spacing:0;-webkit-text-stroke:0.2px #fff;transform-origin:0 0;transform:scaleX(0.9)">1.12797</div>
<div class="abs" style="left:525px;top:188px;width:30px;height:10px;background:#ff0000"></div>
<div class="t" style="left:527.5px;top:188.0px;line-height:11px;color:#fff;font-size:7.5px;letter-spacing:0;-webkit-text-stroke:0.2px #fff;transform-origin:0 0;transform:scaleX(0.9)">1.08605</div>
<div class="abs" style="left:3px;top:288px;width:236px;height:156px;background:#fff;border:1px solid #a0a0a0;border-bottom:none"></div>
<div class="abs" style="left:4px;top:289px;width:234px;height:16px;background:#f8f8f8"></div>
<div class="abs" style="left:54px;top:289px;width:1px;height:79px;background:#ececec"></div>
<div class="abs" style="left:105px;top:289px;width:1px;height:79px;background:#ececec"></div>
<div class="abs" style="left:156px;top:289px;width:1px;height:79px;background:#ececec"></div>
<div class="t n" style="left:8px;top:292px">Order</div>
<div class="t r n" style="left:55px;width:45px;top:292px">Time</div>
<div class="t r n" style="left:106px;width:45px;top:292px">Type</div>
<div class="abs" style="left:4px;top:321px;width:234px;height:1px;background:#efefef"></div>
<svg class="abs" style="left:7px;top:307px" width="10" height="12"><path d="M0.5 1.5Q0.5 0.5 1.5 0.5H7.5Q8.5 0.5 8.5 1.5V7.8L5.8 10.5H1.5Q0.5 10.5 0.5 9.5z" fill="#f4f9ff" stroke="#3a8ad8" stroke-width="1"/><path d="M9 7.5H5.5V11z" fill="#3a8ad8"/><path d="M2 2.5h5M2 4.5h5M2 6.5h3" stroke="#3a8ad8" stroke-width="1" shape-rendering="crispEdges"/></svg>
<div class="t n" style="left:18px;top:308px">67466...</div>
<div class="t n" style="left:59px;top:308px">2015.08...</div>
<div class="t r n" style="left:106px;width:45px;top:308px">buy</div>
<div class="abs" style="left:4px;top:337px;width:234px;height:1px;background:#efefef"></div>
<svg class="abs" style="left:7px;top:323px" width="10" height="12"><path d="M0.5 1.5Q0.5 0.5 1.5 0.5H7.5Q8.5 0.5 8.5 1.5V7.8L5.8 10.5H1.5Q0.5 10.5 0.5 9.5z" fill="#fff6f2" stroke="#e8603a" stroke-width="1"/><path d="M9 7.5H5.5V11z" fill="#e8603a"/><path d="M2 2.5h5M2 4.5h5M2 6.5h3" stroke="#e8603a" stroke-width="1" shape-rendering="crispEdges"/></svg>
<div class="t n" style="left:18px;top:324px">67467...</div>
<div class="t n" style="left:59px;top:324px">2015.08...</div>
<div class="t r n" style="left:106px;width:45px;top:324px">sell</div>
<div class="abs" style="left:4px;top:337px;width:234px;height:15px;background:#c8c8c8"></div>
<svg class="abs" style="left:5px;top:339px" width="12" height="12"><circle cx="5.8" cy="5.5" r="4.2" fill="none" stroke="#303030" stroke-width="1.1"/><path d="M3.6 5.5h4.4" stroke="#303030" stroke-width="1.2"/></svg>
<div class="t n" style="left:18px;top:340px;font-weight:bold;transform:scaleX(0.96)">Balance: 4 985.83 USD&nbsp; Equity: 4 984.52</div>
<svg class="abs" style="left:7px;top:354px" width="10" height="12"><path d="M0.5 1.5Q0.5 0.5 1.5 0.5H7.5Q8.5 0.5 8.5 1.5V7.8L5.8 10.5H1.5Q0.5 10.5 0.5 9.5z" fill="#f4f9ff" stroke="#3a8ad8" stroke-width="1"/><path d="M9 7.5H5.5V11z" fill="#3a8ad8"/><path d="M2 2.5h5M2 4.5h5M2 6.5h3" stroke="#3a8ad8" stroke-width="1" shape-rendering="crispEdges"/></svg>
<div class="t n" style="left:18px;top:355px">67466...</div>
<div class="t n" style="left:59px;top:355px">2015.08...</div>
<div class="t r n" style="left:106px;width:45px;top:355px">buy limit</div>
<div class="abs" style="left:3px;top:443px;width:236px;height:15px;background:#f0f0f0;border-top:1px solid #606060"></div>
<div class="abs" style="left:3px;top:443px;width:2px;height:15px;background:#f0f0f0"></div>
<div class="abs" style="left:5px;top:442px;width:38px;height:16px;background:#fff;border:1px solid #303030;border-top:none;border-right-width:1.5px"></div>
<div class="t n" style="left:12px;top:446px">Trade</div>
<div class="t n" style="left:51px;top:446px;color:#707070">History</div>
<div class="abs" style="left:86px;top:444px;width:1px;height:11px;background:#808080"></div>
<div class="t n" style="left:94px;top:446px;color:#707070">Journal</div>
<div class="abs" style="left:168px;top:228px;width:582px;height:333px;background:#979797;border:1px solid #7a7a7a"></div>
<div class="t" style="left:445px;top:232.5px;font-size:11.5px;line-height:14px;color:#111;letter-spacing:0">Order</div>
<div class="abs" style="left:711px;top:228px;width:34px;height:16px;background:#c75050"></div>
<svg class="abs" style="left:723px;top:231px" width="10" height="10"><path d="M2 2.2L7.6 7.8M7.6 2.2L2 7.8" stroke="#fff" stroke-width="1.7"/></svg>
<div class="abs" style="left:172px;top:250px;width:573px;height:306px;background:#f0f0f0;border:1px solid #707070;box-shadow:inset 0 0 0 1px #fff"></div>
<div class="abs" style="left:181px;top:259px;width:220px;height:288px;background:#fff;border:1px solid #dcdcdc"></div>
<div class="abs" style="left:184px;top:262px;width:181px;height:283px;border:1px solid #000;border-bottom-color:#808080;border-top-color:#808080"></div>
<svg class="abs" style="left:185px;top:262px" width="180" height="282" viewBox="185 262 180 282">
<line x1="208.5" y1="263" x2="208.5" y2="544" stroke="#b4b4b4" stroke-dasharray="2.2,2.35" shape-rendering="auto"/>
<line x1="232.5" y1="263" x2="232.5" y2="544" stroke="#b4b4b4" stroke-dasharray="2.2,2.35" shape-rendering="auto"/>
<line x1="256.5" y1="263" x2="256.5" y2="544" stroke="#b4b4b4" stroke-dasharray="2.2,2.35" shape-rendering="auto"/>
<line x1="281.5" y1="263" x2="281.5" y2="544" stroke="#b4b4b4" stroke-dasharray="2.2,2.35" shape-rendering="auto"/>
<line x1="305.5" y1="263" x2="305.5" y2="544" stroke="#b4b4b4" stroke-dasharray="2.2,2.35" shape-rendering="auto"/>
<line x1="329.5" y1="263" x2="329.5" y2="544" stroke="#b4b4b4" stroke-dasharray="2.2,2.35" shape-rendering="auto"/>
<line x1="353.5" y1="263" x2="353.5" y2="544" stroke="#b4b4b4" stroke-dasharray="2.2,2.35" shape-rendering="auto"/>
<line x1="186" y1="278.5" x2="365" y2="278.5" stroke="#b4b4b4" stroke-dasharray="2.2,2.35" shape-rendering="auto"/>
<line x1="186" y1="302.5" x2="365" y2="302.5" stroke="#b4b4b4" stroke-dasharray="2.2,2.35" shape-rendering="auto"/>
<line x1="186" y1="326.5" x2="365" y2="326.5" stroke="#b4b4b4" stroke-dasharray="2.2,2.35" shape-rendering="auto"/>
<line x1="186" y1="351.5" x2="365" y2="351.5" stroke="#b4b4b4" stroke-dasharray="2.2,2.35" shape-rendering="auto"/>
<line x1="186" y1="375.5" x2="365" y2="375.5" stroke="#b4b4b4" stroke-dasharray="2.2,2.35" shape-rendering="auto"/>
<line x1="186" y1="399.5" x2="365" y2="399.5" stroke="#b4b4b4" stroke-dasharray="2.2,2.35" shape-rendering="auto"/>
<line x1="186" y1="423.5" x2="365" y2="423.5" stroke="#b4b4b4" stroke-dasharray="2.2,2.35" shape-rendering="auto"/>
<line x1="186" y1="447.5" x2="365" y2="447.5" stroke="#b4b4b4" stroke-dasharray="2.2,2.35" shape-rendering="auto"/>
<line x1="186" y1="471.5" x2="365" y2="471.5" stroke="#b4b4b4" stroke-dasharray="2.2,2.35" shape-rendering="auto"/>
<line x1="186" y1="495.5" x2="365" y2="495.5" stroke="#b4b4b4" stroke-dasharray="2.2,2.35" shape-rendering="auto"/>
<line x1="186" y1="519.5" x2="365" y2="519.5" stroke="#b4b4b4" stroke-dasharray="2.2,2.35" shape-rendering="auto"/>
<polyline points="185.3,306.7 187.3,299.6 189.6,299.6 194.3,285.3 210.4,285.3 212.7,292.3 216.7,292.3 219.3,299.6 223.3,299.6 226,291.7 228.3,299.6 230.7,299.6 232.9,291.7 235,299.3 237.3,299.6 239.6,306.9 241.6,299.6 244,306.9 246.3,306.9 250.7,321.3 253.3,321.3 255.6,314 260,314 262.1,321.2 266.8,321.2 268.9,327.8 275.7,387.5 280.5,387.5 282.3,402.3 286.7,402.3 289.4,394.3 292.1,393.8 294.8,384.9 297.8,359 301,358.1 307.8,336.4 314.4,336.4 316.5,321.2 318.8,321.2 321.5,313.6 365,313.6" fill="none" stroke="#ff5c5c" stroke-width="1.15"/>
<polyline points="185.3,408.7 188.9,398 192.1,387.8 194.3,387.3 196.6,380.2 198.7,387.8 201.4,372.1 208,394.4 210.3,388.2 212.4,387.3 214.8,379.3 216.9,395.3 219.2,378.4 221.4,402.8 224.2,394.4 234.4,394.4 237.4,402.4 242,402.4 246.3,416.3 250.9,416.3 253.6,424.4 255.4,424.4 257.5,416.3 260.2,424.4 262.4,424.4 264.3,416.4 266.8,423.9 269,424.5 275.4,490.2 280.3,504.1 282.5,520.2 285,504.5 287.4,512.2 293.2,492.4 298.5,460.7 300.2,467.3 305.3,453.4 307.5,453.4 312.4,429.3 315.2,423.5 317.3,424.5 318.8,431.4 321.4,431.4 323.7,439.3 365,439.3" fill="none" stroke="#1f6ef2" stroke-width="1.15"/>
</svg>
<div class="abs" style="left:365px;top:278px;width:3px;height:1px;background:#444"></div>
<div class="t" style="left:369px;top:273px;font-size:7.5px;letter-spacing:0;-webkit-text-stroke:0.12px #000;transform-origin:0 0;transform:scaleX(0.9)">1.12836</div>
<div class="abs" style="left:365px;top:302px;width:3px;height:1px;background:#444"></div>
<div class="t" style="left:369px;top:297px;font-size:7.5px;letter-spacing:0;-webkit-text-stroke:0.12px #000;transform-origin:0 0;transform:scaleX(0.9)">1.12833</div>
<div class="abs" style="left:365px;top:326px;width:3px;height:1px;background:#444"></div>
<div class="t" style="left:369px;top:321px;font-size:7.5px;letter-spacing:0;-webkit-text-stroke:0.12px #000;transform-origin:0 0;transform:scaleX(0.9)">1.12829</div>
<div class="abs" style="left:365px;top:351px;width:3px;height:1px;background:#444"></div>
<div class="t" style="left:369px;top:346px;font-size:7.5px;letter-spacing:0;-webkit-text-stroke:0.12px #000;transform-origin:0 0;transform:scaleX(0.9)">1.12826</div>
<div class="abs" style="left:365px;top:375px;width:3px;height:1px;background:#444"></div>
<div class="t" style="left:369px;top:370px;font-size:7.5px;letter-spacing:0;-webkit-text-stroke:0.12px #000;transform-origin:0 0;transform:scaleX(0.9)">1.12823</div>
<div class="abs" style="left:365px;top:399px;width:3px;height:1px;background:#444"></div>
<div class="t" style="left:369px;top:394px;font-size:7.5px;letter-spacing:0;-webkit-text-stroke:0.12px #000;transform-origin:0 0;transform:scaleX(0.9)">1.12820</div>
<div class="abs" style="left:365px;top:423px;width:3px;height:1px;background:#444"></div>
<div class="t" style="left:369px;top:418px;font-size:7.5px;letter-spacing:0;-webkit-text-stroke:0.12px #000;transform-origin:0 0;transform:scaleX(0.9)">1.12816</div>
<div class="abs" style="left:365px;top:447px;width:3px;height:1px;background:#444"></div>
<div class="t" style="left:369px;top:442px;font-size:7.5px;letter-spacing:0;-webkit-text-stroke:0.12px #000;transform-origin:0 0;transform:scaleX(0.9)">1.12813</div>
<div class="abs" style="left:365px;top:471px;width:3px;height:1px;background:#444"></div>
<div class="t" style="left:369px;top:466px;font-size:7.5px;letter-spacing:0;-webkit-text-stroke:0.12px #000;transform-origin:0 0;transform:scaleX(0.9)">1.12810</div>
<div class="abs" style="left:365px;top:495px;width:3px;height:1px;background:#444"></div>
<div class="t" style="left:369px;top:490px;font-size:7.5px;letter-spacing:0;-webkit-text-stroke:0.12px #000;transform-origin:0 0;transform:scaleX(0.9)">1.12806</div>
<div class="abs" style="left:365px;top:520px;width:3px;height:1px;background:#444"></div>
<div class="t" style="left:369px;top:515px;font-size:7.5px;letter-spacing:0;-webkit-text-stroke:0.12px #000;transform-origin:0 0;transform:scaleX(0.9)">1.12803</div>
<div class="abs" style="left:367px;top:308px;width:29px;height:10px;background:#f45a5a"></div>
<div class="t" style="left:369.5px;top:308.0px;line-height:11px;color:#fff;font-size:7.5px;letter-spacing:0;-webkit-text-stroke:0.2px #fff;transform-origin:0 0;transform:scaleX(0.9)">1.12831</div>
<div class="abs" style="left:366px;top:434px;width:30px;height:9px;background:#1a70e8"></div>
<div class="t" style="left:368.5px;top:434.0px;line-height:10px;color:#fff;font-size:7.5px;letter-spacing:0;-webkit-text-stroke:0.2px #fff;transform-origin:0 0;transform:scaleX(0.9)">1.12814</div>
<div class="t r n" style="left:377px;width:100px;top:273px;transform:scaleX(0.88)">Symbol:</div>
<div class="abs" style="left:483px;top:268px;width:245px;height:18px;background:#fff;border:1px solid #c6c6c6;border-top-color:#b0b0b0"></div>
<div class="t n" style="left:486px;top:271.5px;color:#000">EURUSD, Euro vs US Dollar</div>
<svg class="abs" style="left:717px;top:274.5px" width="7" height="5"><path d="M0 0h7L3.5 4z" fill="#000"/></svg>
<div class="t r n" style="left:377px;width:100px;top:295px;transform:scaleX(0.88)">Volume:</div>
<div class="abs" style="left:483px;top:290px;width:76px;height:18px;background:#fff;border:1px solid #c6c6c6;border-top-color:#b0b0b0"></div>
<div class="t n" style="left:486px;top:293.5px;color:#000">0.01</div>
<div class="t r n" style="left:377px;width:100px;top:317.5px;transform:scaleX(0.88)">Stop Loss:</div>
<div class="abs" style="left:483px;top:313px;width:76px;height:18px;background:#fff;border:1px solid #c6c6c6;border-top-color:#b0b0b0"></div>
<div class="t n" style="left:486px;top:316.5px;color:#000">1. 12845</div>
<div class="t r n" style="left:545.5px;width:100px;top:317.5px;transform:scaleX(0.95)">Take Profit:</div>
<div class="abs" style="left:651px;top:313px;width:76px;height:18px;background:#fff;border:1px solid #c6c6c6;border-top-color:#b0b0b0"></div>
<div class="t n" style="left:654px;top:316.5px;color:#000">1. 12791</div>
<div class="abs" style="left:543px;top:314px;width:14px;height:8px;background:linear-gradient(#f4f4f4,#dcdcdc);border:1px solid #7a7a7a;border-radius:2.5px"></div>
<div class="abs" style="left:543px;top:322px;width:14px;height:8px;background:linear-gradient(#f4f4f4,#dcdcdc);border:1px solid #7a7a7a;border-radius:2.5px"></div>
<svg class="abs" style="left:547px;top:316px" width="7" height="12"><path d="M0.5 2.8h5L3 0.6z M0.5 8h5L3 10.3z" fill="#000"/></svg>
<div class="abs" style="left:711px;top:314px;width:14px;height:8px;background:linear-gradient(#f4f4f4,#dcdcdc);border:1px solid #7a7a7a;border-radius:2.5px"></div>
<div class="abs" style="left:711px;top:322px;width:14px;height:8px;background:linear-gradient(#f4f4f4,#dcdcdc);border:1px solid #7a7a7a;border-radius:2.5px"></div>
<svg class="abs" style="left:715px;top:316px" width="7" height="12"><path d="M0.5 2.8h5L3 0.6z M0.5 8h5L3 10.3z" fill="#000"/></svg>
<div class="t r n" style="left:377px;width:100px;top:340.5px;transform:scaleX(0.88)">Comment:</div>
<div class="abs" style="left:483px;top:336px;width:245px;height:18px;background:#fff;border:1px solid #c6c6c6;border-top-color:#b0b0b0"></div>
<div class="t r n" style="left:377px;width:100px;top:363px;transform:scaleX(0.88)">Type:</div>
<div class="abs" style="left:483px;top:358px;width:245px;height:19px;background:#fff;border:1px solid #c6c6c6;border-top-color:#b0b0b0"></div>
<div class="t n" style="left:486px;top:362.0px;color:#000">Instant Execution</div>
<svg class="abs" style="left:717px;top:365.5px" width="7" height="5"><path d="M0 0h7L3.5 4z" fill="#000"/></svg>
<div class="abs" style="left:407px;top:388px;width:330px;height:160px;border:1px solid #dcdcdc"></div>
<div class="t n" style="left:414px;top:383px;background:#f0f0f0;padding:0 3px">Instant Execution</div>
<div class="t" style="left:493px;top:402px;font-size:19.5px;line-height:22px;letter-spacing:0.3px;-webkit-text-stroke:0.1px #000">1.1281<span style="font-size:15.5px">4</span> / 1.1283<span style="font-size:15.5px">1</span></div>
<div class="abs" style="left:423px;top:436px;width:140px;height:19px;background:#fff;border:1px solid #707070;border-radius:2px"></div>
<div class="abs" style="left:427px;top:438px;width:132px;height:14px;background:#ff7f7f;border:1px solid #e06060"></div>
<div class="t n" style="left:423px;width:140px;top:441px;text-align:center;transform-origin:50% 0">Sell</div>
<div class="abs" style="left:581px;top:436px;width:140px;height:19px;background:#fff;border:1px solid #707070;border-radius:2px"></div>
<div class="abs" style="left:585px;top:438px;width:132px;height:14px;background:#a0bfff;border:1px solid #8aa8e8"></div>
<div class="t n" style="left:581px;width:140px;top:441px;text-align:center;transform-origin:50% 0">Buy</div>
<div class="abs" style="left:422px;top:461px;width:299px;height:18px;background:#f0f0f0;border:1px solid #dcdcdc"></div>
<div class="abs" style="left:422px;top:489px;width:11px;height:10px;background:linear-gradient(135deg,#dcdcdc,#f8f8f8);border:1px solid #a4a4a4;box-shadow:inset 0 0 0 1px #f4f4f4"></div>
<div class="t n" style="left:436px;top:490px">Enable maximum deviation from quoted price</div>
<div class="t n" style="left:510px;top:512px">Maximum deviation:</div>
<div class="abs" style="left:586px;top:508px;width:31px;height:19px;background:#f0f0f0;border:1px solid #c6c6c6;border-top-color:#b0b0b0"></div>
<div class="t n" style="left:589px;top:512.0px;color:#808080">0</div>
<div class="t n" style="left:620px;top:512px">pips</div>
</body></html>
